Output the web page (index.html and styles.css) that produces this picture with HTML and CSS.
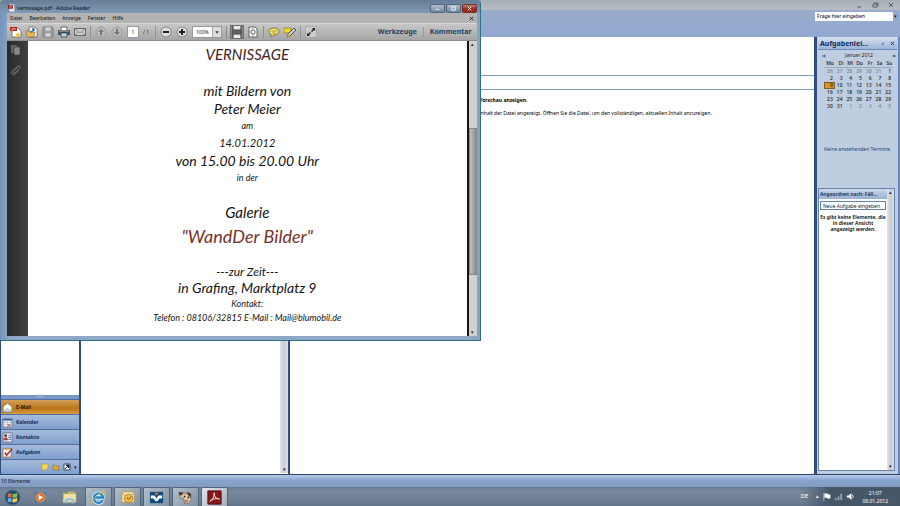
FILE: index.html
```html
<!DOCTYPE html>
<html lang="de">
<head>
<meta charset="utf-8">
<title>Desktop</title>
<link rel="stylesheet" href="styles.css">
</head>
<body>
<main class="outlook">
  <header class="app-title">
    <button aria-label="Outlook minimieren"><svg viewBox="0 0 8 8"><path d="M2 6h4"/></svg></button>
    <button aria-label="Outlook wiederherstellen"><svg viewBox="0 0 8 8"><path d="M2 3h4v3H2zM3 2h4v3"/></svg></button>
    <button aria-label="Outlook schließen"><svg viewBox="0 0 8 8"><path d="M2 2l4 4M6 2L2 6"/></svg></button>
  </header>
  <div class="app-menu">
    <div class="question"><input type="text" aria-label="Frage" value="Frage hier eingeben"><button aria-label="Fragen anzeigen">▾</button></div>
  </div>
  <div class="panes">
    <nav class="navigation">
      <div class="folders"></div>
      <div class="grip">······</div>
      <a href="#mail" class="nav-item active"><svg viewBox="0 0 12 12"><path d="M1 5l5-4 5 4v6H1z" fill="#eee9d8" stroke="#8a7650"/><path d="M3 4h6v3L6 9 3 7z" fill="#fff"/><path d="M1 11l5-4 5 4z" fill="#c6d7ea" stroke="#7c8899" stroke-width=".5"/></svg>E-Mail</a>
      <a href="#calendar" class="nav-item"><svg viewBox="0 0 12 12"><path d="M1 2h10v9H1z" fill="#fff" stroke="#66768f"/><path d="M1 2h10v2H1z" fill="#3e66a8"/><path d="M3 4v7M6 4v7M9 4v7M1 6h10M1 8h10" stroke="#9aabc4" stroke-width=".6"/><path d="M6 8h3v2H6z" fill="#ce5b36"/></svg>Kalender</a>
      <a href="#contacts" class="nav-item"><svg viewBox="0 0 12 12"><path d="M1 1h10v10H1z" fill="#e9eef5" stroke="#60708c"/><circle cx="4" cy="4" r="1.7" fill="#8a4229"/><path d="M1.5 9q0-3 2.5-3t2.5 3z" fill="#b33a2c"/><path d="M7 4h3M7 6h3M7 8h3" stroke="#456a9f"/></svg>Kontakte</a>
      <a href="#tasks" class="nav-item"><svg viewBox="0 0 12 12"><path d="M1 2h9v9H1z" fill="#fff" stroke="#99703c"/><path d="M4 1h3v2H4z" fill="#d09b39"/><path d="M3 6l2 3 6-7" fill="none" stroke="#b3271e" stroke-width="1.7"/></svg>Aufgaben</a>
      <div class="shortcuts">
        <button aria-label="Notizen"><svg viewBox="0 0 8 8"><path d="M1 1h6v4L5 7H1z" fill="#f2d65c" stroke="#a48732" stroke-width=".5"/></svg></button>
        <button aria-label="Ordnerliste"><svg viewBox="0 0 8 8"><path d="M1 2h2l1 1h3v4H1z" fill="#dcaf3c" stroke="#78591d" stroke-width=".5"/></svg></button>
        <button aria-label="Verknüpfungen"><svg viewBox="0 0 8 8"><path d="M1 1h6v6H1z" fill="#fff" stroke="#344a68"/><path d="M2 6l3-3M3 2h3v3z" fill="#152742" stroke="#152742"/></svg></button>
        <button aria-label="Schaltflächen konfigurieren">▾</button>
      </div>
    </nav>
    <section class="messages"><div class="scroll"><span>▾</span></div></section>
    <article class="reading">
      <div class="reading-head"></div>
      <div class="reading-sub"></div>
      <p><strong>Vorschau anzeigen.</strong></p>
      <p>Inhalt der Datei angezeigt. Öffnen Sie die Datei, um den vollständigen, aktuellen Inhalt anzuzeigen.</p>
    </article>
    <aside class="todo">
      <div class="todo-title"><h2>Aufgabenlei...</h2><button aria-label="Leiste minimieren">»</button><button aria-label="Leiste schließen"><svg viewBox="0 0 6 6"><path d="M1 1l4 4M5 1L1 5" stroke="#17283f"/></svg></button></div>
      <div class="month"><button aria-label="Voriger Monat">◀</button><span>Januar 2012</span><button aria-label="Nächster Monat">▶</button></div>
      <table class="calendar">
        <thead><tr><th>Mo</th><th>Di</th><th>Mi</th><th>Do</th><th>Fr</th><th>Sa</th><th>So</th></tr></thead>
        <tbody>
        <tr><td class="off">26</td><td class="off">27</td><td class="off">28</td><td class="off">29</td><td class="off">30</td><td class="off">31</td><td>1</td></tr>
        <tr><td>2</td><td>3</td><td>4</td><td>5</td><td>6</td><td>7</td><td>8</td></tr>
        <tr><td class="today">9</td><td>10</td><td>11</td><td>12</td><td>13</td><td>14</td><td>15</td></tr>
        <tr><td>16</td><td>17</td><td>18</td><td>19</td><td>20</td><td>21</td><td>22</td></tr>
        <tr><td>23</td><td>24</td><td>25</td><td>26</td><td>27</td><td>28</td><td>29</td></tr>
        <tr><td>30</td><td>31</td><td class="off">1</td><td class="off">2</td><td class="off">3</td><td class="off">4</td><td class="off">5</td></tr>
        </tbody>
      </table>
      <p class="appointments">Keine anstehenden Termine.</p>
      <div class="tasks">
        <div class="task-list">
          <button class="sort">Angeordnet nach: Fäll...</button>
          <input type="text" aria-label="Aufgabe" value="Neue Aufgabe eingeben">
          <p>Es gibt keine Elemente, die<br>in dieser Ansicht<br>angezeigt werden.</p>
        </div>
        <div class="scroll"><span>▴</span><span>▾</span></div>
      </div>
    </aside>
  </div>
  <footer class="status">10 Elemente</footer>
</main>

<section class="reader">
  <header class="reader-title">
    <svg viewBox="0 0 10 10"><path d="M2 0h7v10H2z" fill="#eee"/><path d="M0 1h7v5H0z" fill="#8e1714"/><path d="M1 5q3-1 2.500-3.500Q4 4 6 4" stroke="#fff" fill="none" stroke-width=".7"/></svg>
    <h1>vernissage.pdf - Adobe Reader</h1>
    <div class="window-buttons">
      <button aria-label="Minimieren"><svg viewBox="0 0 14 8"><path d="M5 5h4"/></svg></button>
      <button aria-label="Maximieren"><svg viewBox="0 0 14 8"><path d="M5 2h4v4H5z"/></svg></button>
      <button class="close" aria-label="Schließen"><svg viewBox="0 0 14 8"><path d="M5 2l4 4M9 2L5 6"/></svg></button>
    </div>
  </header>
  <nav class="reader-menu"><button>Datei</button><button>Bearbeiten</button><button>Anzeige</button><button>Fenster</button><button>Hilfe</button><button class="end" aria-label="Dokument schließen"><svg viewBox="0 0 6 6"><path d="M1 1l4 4M5 1L1 5" stroke="#111"/></svg></button></nav>
  <div class="toolbar">
    <div class="group">
      <button aria-label="PDF erstellen"><svg viewBox="0 0 12 12"><path d="M2 2h6l3 3v6H2z" fill="#fff" stroke="#555" stroke-width=".7"/><path d="M0 1h7v4H0z" fill="#b4271e"/><path d="M1 4q3 0 2-2 0 1 3 1" fill="none" stroke="#fff" stroke-width=".6"/><path d="M8 6l1 2 2 .2-1.500 1.300.5 2L8 10.500l-2 1 .5-2L5 8l2-.2z" fill="#efc637"/></svg></button>
      <button aria-label="Öffnen"><svg viewBox="0 0 12 12"><path d="M3 1h6l2 2v8H3z" fill="#fff" stroke="#555" stroke-width=".7"/><path d="M0 5h4l1 1h4l-1 5H1z" fill="#e9b84a" stroke="#80612a" stroke-width=".6"/><path d="M4 6q3 0 4-3M6 3h2v2" fill="none" stroke="#3772a7" stroke-width="1.300"/></svg></button>
      <button aria-label="Speichern"><svg viewBox="0 0 12 12"><path d="M1 1h9l1 1v9H1z" fill="#a5a5a5" stroke="#777"/><path d="M3 1h6v4H3zM3 7h6v4H3z" fill="#d2d2d2" stroke="#888" stroke-width=".5"/></svg></button>
      <button aria-label="Drucken"><svg viewBox="0 0 12 12"><path d="M3 1h6v4H3z" fill="#fff" stroke="#444" stroke-width=".8"/><path d="M0 4h12v5H0z" fill="#48525c"/><path d="M1 5h10" stroke="#a9b7c4"/><path d="M3 7h6v4H3z" fill="#afd4ee" stroke="#333" stroke-width=".7"/></svg></button>
      <button aria-label="E-Mail senden"><svg viewBox="0 0 12 12"><path d="M.5 2.500h11v7H.5z" fill="#d1d1d1" stroke="#4c4c4c" stroke-width=".8"/><path d="M1 3l5 4 5-4M1 9l3-3M11 9L8 6" fill="none" stroke="#666" stroke-width=".7"/></svg></button>
    </div>
    <div class="group">
      <button aria-label="Vorherige Seite"><svg viewBox="0 0 12 12"><circle cx="6" cy="6" r="5" fill="#bbb" stroke="#9b9b9b"/><path d="M6 3l3 3H7v3H5V6H3z" fill="#777"/></svg></button>
      <button aria-label="Nächste Seite"><svg viewBox="0 0 12 12"><circle cx="6" cy="6" r="5" fill="#bbb" stroke="#9b9b9b"/><path d="M6 9L3 6h2V3h2v3h2z" fill="#777"/></svg></button>
      <input class="page-number" type="text" aria-label="Seite" value="1"><span class="pages">/ 1</span>
    </div>
    <div class="group">
      <button aria-label="Verkleinern"><svg viewBox="0 0 12 12"><circle cx="6" cy="6" r="5" fill="#ddd" stroke="#777" stroke-width=".8"/><path d="M3 6h6" stroke="#222" stroke-width="2"/></svg></button>
      <button aria-label="Vergrößern"><svg viewBox="0 0 12 12"><circle cx="6" cy="6" r="5" fill="#ddd" stroke="#777" stroke-width=".8"/><path d="M3 6h6M6 3v6" stroke="#222" stroke-width="2"/></svg></button>
      <div class="zoom"><select aria-label="Zoom"><option>100%</option></select><svg viewBox="0 0 8 12"><path d="M2 5h4L4 8z" fill="#333"/></svg></div>
    </div>
    <div class="group">
      <button class="pressed" aria-label="Seitenbreite"><svg viewBox="0 0 12 12"><path d="M2 0v4h8V0M2 12V8h8v4" fill="#ececec" stroke="#333"/><path d="M1 6h10M3 4L1 6l2 2M9 4l2 2-2 2" fill="none" stroke="#333" stroke-width=".8"/></svg></button>
      <button aria-label="Ganze Seite"><svg viewBox="0 0 12 12"><path d="M2 1h6l2 2v8H2z" fill="#fff" stroke="#444" stroke-width=".8"/><path d="M6 2v3M6 7v3M3 6h2M7 6h2M4 4l1 1M8 4L7 5M4 8l1-1M8 8L7 7" stroke="#333" stroke-width=".8"/></svg></button>
    </div>
    <div class="group">
      <button aria-label="Notiz"><svg viewBox="0 0 12 12"><path d="M6 2c7 0 6 7 0 7L3 11V8C-1 6 1 2 6 2z" fill="#f5e66b" stroke="#695f22" stroke-width=".8"/><path d="M3 5h6M4 7h4" stroke="#807533" stroke-width=".7"/></svg></button>
      <button aria-label="Hervorheben"><svg viewBox="0 0 12 12"><path d="M0 2h7v5H0z" fill="#efd82f" stroke="#766c16" stroke-width=".6"/><path d="M4 8l6-6 2 2-6 6-3 1z" fill="#ccc" stroke="#333" stroke-width=".8"/><path d="M4 8l2 2-3 1z" fill="#e5ca13"/></svg></button>
    </div>
    <div class="group">
      <button aria-label="Vollbild"><svg viewBox="0 0 12 12"><path d="M.5.5h11v11H.5z" fill="#ccc" stroke="#999" stroke-width=".6"/><path d="M7 2h3v3L9 4 7 6 6 5l2-2zM5 10H2V7l1 1 2-2 1 1-2 2z" fill="#222"/></svg></button>
    </div>
    <div class="group panel-links"><button>Werkzeuge</button><button>Kommentar</button></div>
  </div>
  <div class="document">
    <div class="rail">
      <button aria-label="Seitenminiaturen"><svg viewBox="0 0 12 12"><path d="M1 1h6v8H1z" fill="#636363"/><path d="M4 3h6v8H4z" fill="#888" stroke="#393939" stroke-width=".6"/></svg></button>
      <button aria-label="Anlagen"><svg viewBox="0 0 12 12"><path d="M8 3L3 8q0 2 2 1l5-5q1-3-2-2L2 7q-2 4 2 4l5-5" fill="none" stroke="#6c6c6c"/></svg></button>
    </div>
    <article class="paper">
      <p class="heading">VERNISSAGE</p>
      <p class="large">mit Bildern von</p>
      <p class="large">Peter Meier</p>
      <p class="small">am</p>
      <p class="date">14.01.2012</p>
      <p class="large">von 15.00 bis 20.00 Uhr</p>
      <p class="small">in der</p>
      <p class="venue">Galerie</p>
      <p class="gallery">"WandDer Bilder"</p>
      <p class="now">---zur Zeit---</p>
      <p class="large">in Grafing, Marktplatz 9</p>
      <p class="contact">Kontakt:</p>
      <p class="contact">Telefon : 08106/32815 E-Mail : Mail@blumobil.de</p>
    </article>
    <div class="reader-scroll"><span>▴</span><div class="track"><i></i></div><span>▾</span></div>
  </div>
</section>

<footer class="taskbar">
  <button class="task plain start" aria-label="Start"><svg viewBox="0 0 18 18"><circle cx="9" cy="9" r="8" fill="#244d73" stroke="#4f6a80"/><path d="M4 5q2-1 4 0v4q-2-1-4 0z" fill="#e26c35"/><path d="M9 5q2 1 5-1v4q-3 2-5 1z" fill="#8cbd49"/><path d="M4 10q2-1 4 0v4q-2-1-4 0z" fill="#64afe5"/><path d="M9 10q2 1 5-1v4q-3 2-5 1z" fill="#f1c84a"/></svg></button>
  <button class="task plain" aria-label="Media Player"><svg viewBox="0 0 18 18"><path d="M4 4h10v10H4z" fill="#629ac2" stroke="#446985"/><circle cx="9" cy="9" r="5" fill="#db6c2b" stroke="#f3c7a2" stroke-width=".6"/><path d="M7 6l5 3-5 3z" fill="#fff"/></svg></button>
  <button class="task plain" aria-label="Explorer"><svg viewBox="0 0 18 18"><path d="M2 4h5l1-1h7v11H2z" fill="#d5b761"/><path d="M3 5h13v9H2z" fill="#f3e2a4" stroke="#a89254" stroke-width=".5"/><path d="M5 3h2v2H5z" fill="#54a265"/><path d="M4 15v-4q5-3 10 0v4h-3v-3H7v3z" fill="#8fc5dc"/></svg></button>
  <button class="task" aria-label="Internet Explorer"><svg viewBox="0 0 18 18"><path d="M13.500 12A5 5 0 1 1 14 9H5" fill="none" stroke="#e4f3fc" stroke-width="4"/><path d="M13.500 12A5 5 0 1 1 14 9H5" fill="none" stroke="#2486c8" stroke-width="2.500"/><path d="M3 15q-3 0 2-6 8-8 11-6 1 1-1 4" fill="none" stroke="#e7c23e"/></svg></button>
  <button class="task" aria-label="Outlook"><svg viewBox="0 0 18 18"><path d="M3 3h13v11H3z" fill="#f4ebc5" stroke="#b89657"/><path d="M3 4l6 5 7-5" fill="none" stroke="#bc933e"/><circle cx="10" cy="10" r="4.500" fill="#efba3f" stroke="#956920" stroke-width=".7"/><path d="M8 9l2 2 3-3" fill="none" stroke="#684d20"/></svg></button>
  <button class="task" aria-label="Volksbank"><svg viewBox="0 0 18 18"><path d="M2 3h14v12H2z" fill="#124c83"/><path d="M3 7h4l2 3 2-3h4v3h-3l-2 3H8l-2-3H3z" fill="#fff"/><path d="M7 4h4L9 7z" fill="#ed842c"/></svg></button>
  <button class="task" aria-label="Bildbearbeitung"><svg viewBox="0 0 18 18"><path d="M3 6l4-2 6 2 2 5-3 4H8l-1-5-4-1z" fill="#e3cfae" stroke="#6f5543" stroke-width=".7"/><path d="M2 3l5 1-2 3-3-1zM11 3l4 2v4l-4-3z" fill="#563a30"/><circle cx="8" cy="8" r="1" fill="#222"/><circle cx="12" cy="9" r="1" fill="#222"/><path d="M8 12q2-2 4 0l-1 2H8z" fill="#b37d61"/></svg></button>
  <button class="task current" aria-label="Adobe Reader"><svg viewBox="0 0 18 18"><path d="M2 2h14v14H2z" fill="#851918" stroke="#4d1111"/><path d="M4 13q5-3 5-8 0-2-1 0 2 6 6 6 1-1-2-1-5 0-8 3z" fill="none" stroke="#f3dede"/></svg></button>
  <div class="tray"><span>DE</span><span class="up">▴</span>
    <svg viewBox="0 0 10 10"><path d="M2 1v9M3 2h3l1 1h2v4H6L5 6H3z" fill="#fff" stroke="#eee" stroke-width=".7"/></svg>
    <svg viewBox="0 0 10 10"><path d="M1 9h2V7H1zM4 9h2V5H4zM7 9h2V2H7z" fill="#9aa6b0"/></svg>
    <svg viewBox="0 0 10 10"><path d="M1 4h2l3-3v8L3 6H1z" fill="#fff"/><path d="M7 3q2 2 0 4" fill="none" stroke="#fff"/></svg>
    <time datetime="2012-01-09T21:07">21:07<br>09.01.2012</time>
  </div>
</footer>
</body>
</html>
```

FILE: styles.css
```css
* { box-sizing: border-box; }
body {
  margin: 0;
  height: 100vh;
  display: flex;
  flex-direction: column;
  overflow: hidden;
  position: relative;
  font: 5px/7px "Noto Sans", "Open Sans", sans-serif;
  color: #16202b;
}
h1, h2, p { margin: 0; }
button, input, select {
  font: inherit;
  color: inherit;
  margin: 0;
  padding: 0;
  border: 0;
  border-radius: 0;
  background: none;
}
svg { display: block; flex: none; }

/* Outlook */
.outlook { flex: 1; min-height: 0; display: flex; flex-direction: column; }
.app-title {
  height: 10px;
  flex: none;
  display: flex;
  justify-content: flex-end;
  gap: 8px;
  padding: 0 5px;
  background: linear-gradient(#a8afb7, #b9bdc3);
}
.app-title svg { width: 8px; height: 8px; fill: none; stroke: #53606c; stroke-width: 1; }
.app-menu {
  height: 27px;
  flex: none;
  padding: 2px 2px 0;
  display: flex;
  justify-content: flex-end;
  align-items: flex-start;
  background: linear-gradient(#9aaccb, #91a8d0);
}
.question { width: 83px; height: 9px; display: flex; background: #fff; font-size: 6px; }
.question input { flex: 1; min-width: 0; padding-left: 2px; font-size: 5px; font-weight: 500; }
.question button { width: 5px; background: #8eaad2; font-size: 5px; }
.panes { flex: 1; min-height: 0; display: flex; background: #2c4d7d; border-bottom: 1px solid #29466e; }

.navigation { width: 81px; padding: 0 2px 0 1px; display: flex; flex-direction: column; background: #2c4d7d; }
.folders { flex: 1; background: #fff; }
.grip { height: 4px; line-height: 3px; text-align: center; background: #7897c4; color: #fff; }
.nav-item {
  height: 15px;
  display: flex;
  align-items: center;
  gap: 3px;
  padding-left: 1px;
  color: #102d5d;
  font-weight: 700;
  text-decoration: none;
  border-top: 1px solid #4f6f9d;
  background: linear-gradient(#a5bbdc, #819fcc);
}
.nav-item svg { width: 11px; height: 11px; }
.nav-item.active { color: #241a08; background: linear-gradient(#cf9f5b, #bd7517 60%, #d99b3d); }
.shortcuts {
  height: 15px;
  display: flex;
  justify-content: flex-end;
  align-items: center;
  gap: 3px;
  padding-right: 2px;
  border-top: 1px solid #4f6f9d;
  background: linear-gradient(#a5bbdc, #819fcc);
}
.shortcuts svg { width: 8px; height: 8px; }

.scroll { width: 8px; display: flex; flex-direction: column; align-items: center; justify-content: space-between; background: linear-gradient(90deg, #e4e4e4, #c8cdd0, #dedede); }
.messages { width: 207px; margin-right: 2px; padding-bottom: 1px; display: flex; justify-content: flex-end; background: #fff; }
.messages .scroll { justify-content: flex-end; }
.reading { flex: 1; min-width: 0; background: #fff; color: #000; white-space: nowrap; overflow: hidden; }
.reading-head { height: 39px; border-bottom: 1px solid #7e9dbb; }
.reading-sub { height: 14px; margin-bottom: 7px; border-bottom: 1px solid #7e9dbb; }
.reading p { padding-left: 189px; margin-bottom: 6px; }

.todo { width: 83px; margin-left: 3px; padding: 0 5px 3px 1px; display: flex; flex-direction: column; background: #bfcde0; border-right: 2px solid #6787b6; }
.todo-title { height: 13px; flex: none; display: flex; align-items: center; gap: 6px; padding-left: 2px; margin-right: -4px; background: linear-gradient(#d4e0f0, #9cb4d8); border-bottom: 1px solid #6e8cb8; }
.todo-title h2 { flex: 1; font-size: 7px; color: #0f2b62; white-space: nowrap; }
.todo-title button:last-child { margin-right: 2px; }
.todo-title svg, .reader-menu svg { width: 5px; height: 5px; }
.month { height: 9px; flex: none; margin: 1px -3px 0 4px; display: flex; justify-content: space-between; align-items: center; }
.month button { color: #315c9b; font-size: 4px; }
.calendar { margin: 0 0 0 6px; border-collapse: collapse; table-layout: fixed; }
.calendar th, .calendar td { height: 7px; padding: 0 2px 0 0; line-height: 7px; text-align: right; font-weight: 500; }
.calendar th { padding-right: 1px; border-bottom: 1px solid #9daabd; }
.calendar .off { color: #77828f; }
.calendar .today { background: #d9941f; outline: 1px solid #875e22; outline-offset: -1px; }
.appointments { margin: 36px -4px 35px 0; text-align: center; white-space: nowrap; color: #28456e; }
.tasks { flex: 1; min-height: 0; display: flex; border: 1px solid #6785aa; background: #fff; margin-right: -2px; }
.tasks .scroll { width: 7px; }
.task-list { flex: 1; min-width: 0; display: flex; flex-direction: column; }
.sort { height: 10px; text-align: left; padding-left: 1px; white-space: nowrap; overflow: hidden; background: linear-gradient(#cad8eb, #98b1d4); color: #10294e; font-weight: 600; }
.task-list input { height: 9px; margin: 2px 1px; padding: 0 2px; border: 1px solid #6381ac; }
.task-list p { padding-top: 2px; line-height: 6px; text-align: center; white-space: nowrap; font-weight: 600; color: #000; }
.status { height: 12px; flex: none; padding: 3px 1px; background: linear-gradient(#bacbe5, #88a3cf 45%, #829bbf); }

/* Adobe Reader */
.reader {
  position: absolute;
  inset: 0 auto auto 0;
  width: 53.4%;
  height: 67.4%;
  padding: 1px 3px 4px 7px;
  display: flex;
  flex-direction: column;
  border: solid #27758d;
  border-width: 0 1px 1px 0;
  border-radius: 4px 4px 0 0;
  background: linear-gradient(90deg, #7295bd, #8fa7c4 2%, #8fa7c4 98%, #8ba0bb);
}
.reader-title { height: 13px; flex: none; display: flex; align-items: center; gap: 2px; margin: -1px -3px 0 -7px; padding: 3px 3px 0 8px; background: linear-gradient(#677d95, #8099b6); border-radius: 4px 4px 0 0; }
.reader-title > svg { width: 7px; height: 8px; }
.reader-title h1 { flex: 1; font-size: 5px; font-weight: 500; color: #0c1c2d; }
.window-buttons { display: flex; gap: 1px; }
.window-buttons button { background: linear-gradient(#b3c1d0, #6f849d); border: 1px solid #50667f; border-radius: 2px; }
.window-buttons svg { width: 13px; height: 7px; fill: none; stroke: #fff; stroke-width: 1; }
.window-buttons .close { background: linear-gradient(#c58579, #98291d 55%); border-color: #743028; }
.reader-menu { height: 10px; flex: none; display: flex; align-items: center; gap: 7px; padding: 0 3px; background: #b3b3b3; color: #111; }
.reader-menu .end { margin-left: auto; }
.toolbar { height: 18px; flex: none; display: flex; align-items: center; padding: 0 2px 0 3px; background: linear-gradient(#c7c7c7, #a5a5a5); border-top: 1px solid #d7d7d7; border-bottom: 1px solid #8f8f8f; }
.group { display: flex; align-items: center; gap: 4px; padding-right: 4px; }
.group + .group { padding-left: 4px; border-left: 1px solid #8f8f8f; }
.toolbar .group svg { width: 12px; height: 12px; }
.page-number { width: 12px; height: 12px; text-align: center; background: #fff; border: 1px solid #999; }
.pages { width: 8px; white-space: nowrap; }
.zoom { width: 30px; height: 12px; display: flex; background: #fff; border: 1px solid #999; }
.zoom select { appearance: none; flex: 1; min-width: 0; padding-left: 3px; }
.toolbar .group .zoom svg { width: 9px; height: 10px; background: #ddd; border-left: 1px solid #aaa; }
.pressed { background: #888; outline: 1px solid #707070; }
.toolbar .group.panel-links { margin-left: auto; border-left: 0; padding-right: 0; gap: 0; }
.panel-links button { padding: 0 6px; color: #26435f; font-size: 7px; line-height: 10px; font-weight: 700; }
.panel-links button + button { border-left: 1px solid #999; padding-right: 3px; }
.document { flex: 1; min-height: 0; display: flex; background: #303030; }
.rail { width: 21px; padding: 3px; display: flex; flex-direction: column; gap: 8px; background: linear-gradient(90deg, #292929, #414141); }
.rail svg { width: 12px; height: 12px; }
.paper { flex: 1; padding-top: 4px; background: #fff; color: #151515; text-align: center; font-family: Lato, sans-serif; font-style: italic; overflow: hidden; }
.heading { font-size: 15px; line-height: 18px; margin-bottom: 19px; color: #431e1e; }
.large { font-size: 14px; line-height: 18px; }
.date { font-size: 11px; line-height: 18px; }
.small { font-size: 9px; line-height: 16px; }
.venue { font-size: 15px; line-height: 18px; margin-top: 17px; }
.gallery { font-size: 18px; line-height: 30px; margin-bottom: 13px; color: #763327; }
.now { font-size: 12px; line-height: 15px; }
.contact { font-size: 9px; line-height: 14px; }
.reader-scroll { width: 10px; display: flex; flex-direction: column; align-items: center; border-left: 2px solid #161616; background: #d1d1d1; color: #222; }
.track { flex: 1; width: 100%; display: flex; flex-direction: column; }
.track::before { content: ""; flex: 80; }
.track::after { content: ""; flex: 54; }
.track i { flex: 144; background: linear-gradient(90deg, #c2c2c2, #8c8c8c); border: 1px solid #888; }

/* Windows taskbar */
.taskbar { height: 19px; flex: none; display: flex; align-items: stretch; gap: 2px; background: linear-gradient(#647a91, #76879b 15%, #6e7f93 75%, #62748a); }
.task { width: 27px; display: flex; align-items: center; justify-content: center; border: 1px solid #536579; border-bottom: 0; border-radius: 2px 2px 0 0; background: linear-gradient(135deg, #b3c0cc, #8191a3); }
.task svg { width: 17px; height: 17px; }
.task.plain { border-color: transparent; background: none; }
.task.start { width: 25px; }
.task.current { background: linear-gradient(135deg, #e0e5e9, #a2afbc); }
.tray { margin-left: auto; padding-right: 12px; display: flex; align-items: center; gap: 3px; color: #fff; background: linear-gradient(90deg, transparent, #46576a 30%); }
.tray > span:first-child { margin-right: 5px; font-size: 6px; }
.tray svg { width: 9px; height: 9px; }
.tray time { margin-left: 4px; text-align: center; font-size: 5px; line-height: 8px; }
```
